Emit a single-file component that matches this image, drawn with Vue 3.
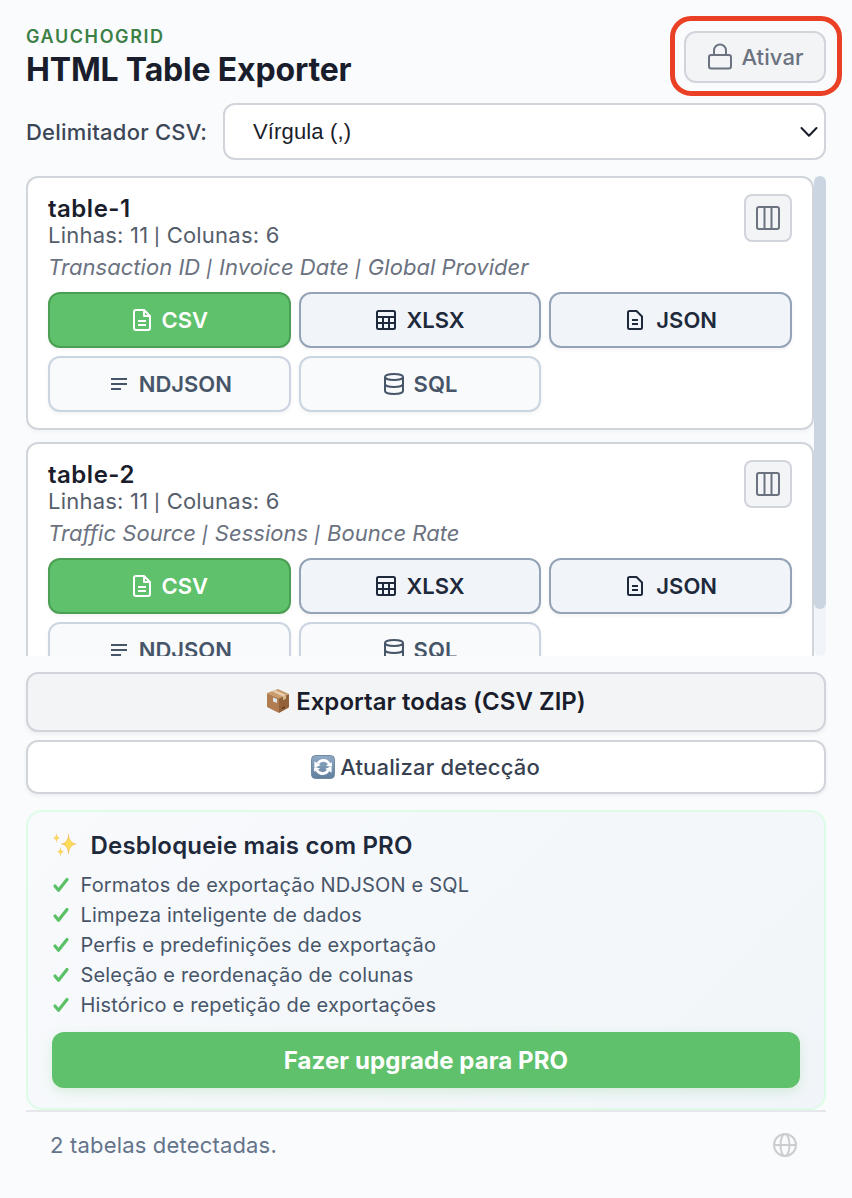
<script setup>
const tables = [
  { name: 'table-1', meta: ['Linhas: 11', 'Colunas: 6'], columns: ['Transaction ID', 'Invoice Date', 'Global Provider'] },
  { name: 'table-2', meta: ['Linhas: 11', 'Colunas: 6'], columns: ['Traffic Source', 'Sessions', 'Bounce Rate'] },
]
const features = [
  'Formatos de exportação NDJSON e SQL',
  'Limpeza inteligente de dados',
  'Perfis e predefinições de exportação',
  'Seleção e reordenação de colunas',
  'Histórico e repetição de exportações',
]
</script>

<template>
  <main class="popup">
    <header class="header">
      <div class="brand">
        <div class="eyebrow"><span>GAUCHOGRID</span></div>
        <h1><span>HTML Table Exporter</span></h1>
      </div>
      <button class="activate">
        <svg width="26" height="28" viewBox="0 0 26 28" fill="none" stroke="currentColor" stroke-width="2" stroke-linejoin="round">
          <rect x="2" y="12" width="22" height="13.5" rx="2.2" />
          <path d="M7 12V7.500a6 6 0 0 1 12 0V12" />
        </svg>
        <span>Ativar</span>
        <i class="highlight"></i>
      </button>
    </header>

    <div class="delimiter">
      <label><span>Delimitador CSV:</span></label>
      <div class="select">
        <span>Vírgula (,)</span>
        <svg width="18" height="12" viewBox="0 0 18 12" fill="none" stroke="#1a1d2b" stroke-width="2" stroke-linecap="round" stroke-linejoin="round"><path d="M1.500 2 9 9.700 16.500 2" /></svg>
      </div>
    </div>

    <section class="list">
      <div class="cards">
        <article v-for="t in tables" :key="t.name" class="card">
          <div class="card-head">
            <div>
              <h2><span>{{ t.name }}</span></h2>
              <p class="meta"><template v-for="(part, i) in t.meta" :key="part"><span v-if="i" class="bar"> | </span>{{ part }}</template></p>
            </div>
            <button class="columns">
              <svg width="24" height="24" viewBox="0 0 24 24" fill="none" stroke="currentColor" stroke-width="2"><rect x="1" y="1" width="22" height="22" rx="2" /><path d="M8.500 1v22M15.500 1v22" /></svg>
            </button>
          </div>
          <p class="preview"><template v-for="(part, i) in t.columns" :key="part"><span v-if="i" class="bar"> | </span>{{ part }}</template></p>
          <div class="formats">
            <button class="format csv">
              <svg width="20" height="24" viewBox="0 0 20 24" fill="none" stroke="currentColor" stroke-width="2" stroke-linejoin="round"><path d="M12 2H4a2 2 0 0 0-2 2v16a2 2 0 0 0 2 2h12a2 2 0 0 0 2-2V8zM12 2v6h6M6 13h8M6 17h8" /></svg>
              <span>CSV</span>
            </button>
            <button class="format xlsx">
              <svg width="22" height="24" viewBox="0 0 22 24" fill="none" stroke="currentColor" stroke-width="2"><rect x="2" y="3" width="18" height="18" rx="1.500" /><path d="M2 9h18M2 15h18M8 9v12M14 9v12" /></svg>
              <span>XLSX</span>
            </button>
            <button class="format json">
              <svg width="18" height="24" viewBox="0 0 18 24" fill="none" stroke="currentColor" stroke-width="2" stroke-linejoin="round"><path d="M10.500 3H3.500A1.500 1.500 0 0 0 2 4.500v15A1.500 1.500 0 0 0 3.500 21h11a1.500 1.500 0 0 0 1.500-1.500V8.500zM6 12h6M6 16h6" /></svg>
              <span>JSON</span>
            </button>
            <button class="format pro ndjson">
              <svg width="18" height="24" viewBox="0 0 18 24" fill="none" stroke="currentColor" stroke-width="2"><path d="M1 7h16M1 12h16M1 17h10" /></svg>
              <span>NDJSON</span>
            </button>
            <button class="format pro">
              <svg width="22" height="24" viewBox="0 0 22 24" fill="none" stroke="currentColor" stroke-width="2"><ellipse cx="11" cy="5" rx="9" ry="3" /><path d="M2 5v14c0 1.700 4 3 9 3s9-1.300 9-3V5M2 12c0 1.700 4 3 9 3s9-1.300 9-3" /></svg>
              <span>SQL</span>
            </button>
          </div>
        </article>
      </div>
      <div class="track"><div class="thumb"></div></div>
    </section>

    <button class="wide export">
      <svg width="24" height="26" viewBox="0 0 24 26">
        <path fill="#b07c50" d="M1 5 13 10v15L2 19.500Q1 19 1 18z" />
        <path fill="#94623a" d="M13 10 23 6v12.500q0 1-1 1.500l-9 5z" />
        <path fill="#c99b6c" d="M1 5 12 1l11 5-10 4.500z" />
        <path fill="#e7ceb0" d="m6 3.200 3-1.100 11 5-3 1.300z" />
        <path fill="#d8b991" d="m17 8.400 3-1.300v3.700l-3 1.400z" />
        <path fill="#dce6ef" d="m7 9.500 4 1.600v4L7 13.400z" />
        <path fill="#64411f" d="m16 19.500 3-1.400v1.800l-3 1.400z" />
      </svg>
      <span>Exportar todas (CSV ZIP)</span>
    </button>
    <button class="wide refresh">
      <svg width="24" height="24" viewBox="0 0 24 24">
        <defs><linearGradient id="refresh-bg" x2="0" y2="1"><stop stop-color="#91abc6" /><stop offset="1" stop-color="#607f9d" /></linearGradient></defs>
        <rect x=".5" y=".5" width="23" height="23" rx="4" fill="url(#refresh-bg)" stroke="#718ba5" />
        <path d="M7 8.500C9.500 4.300 15.500 4.300 18.300 9M17 15.500C14.500 19.700 8.500 19.700 5.700 15" fill="none" stroke="#fff" stroke-width="2.600" />
        <path fill="#fff" d="M3.400 6.300v6.500l6.300-2.600zM20.600 17.700v-6.500l-6.300 2.600zM20.900 7.200v5l-6.200-1.800zM3.100 16.800v-5l6.200 1.800z" />
      </svg>
      <span>Atualizar detecção</span>
    </button>

    <section class="promo">
      <h3>
        <svg width="26" height="26" viewBox="0 0 26 26">
          <defs><radialGradient id="spark"><stop stop-color="#fbe34f" /><stop offset=".45" stop-color="#fbd263" /><stop offset="1" stop-color="#f3a768" /></radialGradient></defs>
          <g fill="url(#spark)"><path d="M16.500 1q.7 10.200 8.500 11-7.800.8-8.500 11Q15.800 12.800 8.500 12 15.800 11.200 16.500 1z" /><path d="M4.500 1q.4 4.600 3.500 5-3.100.4-3.500 5Q4.100 6.400 1 6q3.100-.4 3.500-5z" /><path d="M8.500 15q.4 4.300 3.500 4.700-3.100.4-3.500 4.800-.4-4.400-3.500-4.800 3.100-.4 3.500-4.700z" /></g>
        </svg>
        <span>Desbloqueie mais com PRO</span>
      </h3>
      <ul>
        <li v-for="f in features" :key="f">
          <svg width="18" height="18" viewBox="0 0 18 18" fill="none" stroke="#5cc067" stroke-width="3.200" stroke-linecap="round" stroke-linejoin="round"><path d="M3 10 6.500 14.300 15 3.500" /></svg>
          <span>{{ f }}</span>
        </li>
      </ul>
      <button class="upgrade"><span>Fazer upgrade para PRO</span></button>
    </section>

    <footer>
      <span>2 tabelas detectadas.</span>
      <svg width="24" height="24" viewBox="0 0 24 24" fill="none" stroke="#cccdcf" stroke-width="2"><circle cx="12" cy="12" r="11" /><ellipse cx="12" cy="12" rx="4.500" ry="11" /><path d="M1 12h22" /></svg>
    </footer>
  </main>
</template>

<style>
body { background: #fafbfd; overflow: hidden; }
</style>

<style scoped>
* { box-sizing: border-box; }
.popup { height: 1198px; padding: 26px 26px 0; display: flex; flex-direction: column; background: #fafbfd; color: #1a1d2b; font-family: Inter, "Liberation Sans", sans-serif; font-size: 22px; }
h1, h2, h3, p, ul { margin: 0; padding: 0; }
span { white-space: nowrap; }
svg { display: block; flex: none; }
button { font: inherit; color: inherit; padding: 0; margin: 0; display: flex; align-items: center; justify-content: center; border: 2px solid #d1d5db; }
.header { height: 77px; display: flex; justify-content: space-between; }
.eyebrow { height: 20px; line-height: 21px; font-size: 18px; font-weight: 600; letter-spacing: 1.6px; color: #3c8046; }
h1 { height: 42px; line-height: 47px; font-size: 32px; font-weight: 700; letter-spacing: -.18px; }
.activate { position: relative; width: 142px; height: 52px; margin-top: 5px; gap: 8px; padding-left: 1px; border-radius: 12px; background: #f3f4f6; color: #6b7280; font-weight: 500; letter-spacing: .1px; }
.highlight { position: absolute; left: -16px; top: -17px; width: 171.500px; height: 79.500px; border: 5px solid #ea4025; border-radius: 21px; }
.delimiter { height: 57px; display: flex; justify-content: space-between; align-items: center; }
.delimiter label { color: #3d4656; font-weight: 500; letter-spacing: .22px; }
.select { width: 603px; height: 57px; border: 2px solid #d1d5db; border-radius: 12px; background: #fff; display: flex; align-items: center; justify-content: space-between; padding: 0 6px 0 28px; font-family: "Liberation Sans", sans-serif; letter-spacing: .15px; }
.list { margin-top: 16px; height: 480px; display: flex; }
.cards { width: 788px; height: 480px; overflow: hidden; display: flex; flex-direction: column; gap: 12px; }
.card { flex: none; height: 254px; border: 2px solid #d1d5db; border-radius: 12px; background: #fff; padding: 16px 20px; box-shadow: 0 2px 4px #0000000a; }
.card-head { height: 60px; display: flex; justify-content: space-between; }
h2 { height: 28px; line-height: 29px; font-size: 24px; font-weight: 600; letter-spacing: .5px; }
.meta { height: 28px; line-height: 27px; color: #555e6b; letter-spacing: .22px; }
.bar { font-size: 17px; font-weight: 500; white-space: pre; letter-spacing: 1.1px; }
.columns { width: 48px; height: 48px; border-radius: 8px; background: #f3f4f6; color: #6b7280; }
.preview { height: 38px; line-height: 27px; font-style: italic; color: #6b7280; letter-spacing: .03px; }
.preview .bar { letter-spacing: 1.3px; }
.formats { display: grid; grid-template-columns: repeat(3, 1fr); grid-auto-rows: 56px; gap: 8px; }
.format { gap: 9px; border-color: #94a3b8; border-radius: 12px; background: #f1f5f9; color: #1e293b; font-weight: 600; box-shadow: 0 2px 4px #0000000d; }
.csv { background: #5fc16b; border-color: #4a9f54; color: #fff; gap: 10px; padding-left: 1px; }
.xlsx { padding-left: 0; }
.json { gap: 12px; padding-left: 2px; }
.pro { background: #f8fafc; border-color: #cbd5e1; color: #475569; }
.ndjson { gap: 11px; padding-left: 3px; }
.track { width: 12px; height: 480px; border-radius: 6px; background: #f1f5f9; }
.thumb { height: 433px; border-radius: 6px; background: #cbd5e1; }
.wide { flex: none; width: 800px; border-radius: 12px; gap: 6px; box-shadow: 0 2px 4px #0000000f; }
.export { height: 60px; margin-top: 16px; padding-bottom: 2px; background: #f3f4f6; font-size: 24px; font-weight: 600; letter-spacing: .03px; }
.refresh { height: 54px; margin-top: 8px; gap: 5px; padding-right: 1px; background: #fff; color: #374151; font-weight: 500; letter-spacing: .17px; }
.promo { flex: none; height: 300px; margin-top: 16px; border: 2px solid #dcfce7; border-radius: 16px; padding: 17px 24px 20px; background: linear-gradient(135deg, #f8fafc, #f1f5f9); }
h3 { height: 32px; display: flex; align-items: center; gap: 12.500px; font-size: 24px; font-weight: 600; color: #1e293b; letter-spacing: .18px; }
ul { list-style: none; margin-top: 9px; height: 162px; }
li { height: 30px; display: flex; align-items: center; gap: 10.500px; font-size: 20px; color: #475569; letter-spacing: .17px; }
.upgrade { width: 748px; height: 56px; border: 0; border-radius: 12px; background: #5fc16b; color: #fff; font-size: 24px; font-weight: 700; letter-spacing: .08px; box-shadow: 0 4px 12px #5fc16b33; }
footer { flex: none; height: 88px; border-top: 2px solid #e5e7eb; padding: 0 29px 20px 24px; display: flex; align-items: center; justify-content: space-between; color: #64748b; letter-spacing: .18px; }
</style>
